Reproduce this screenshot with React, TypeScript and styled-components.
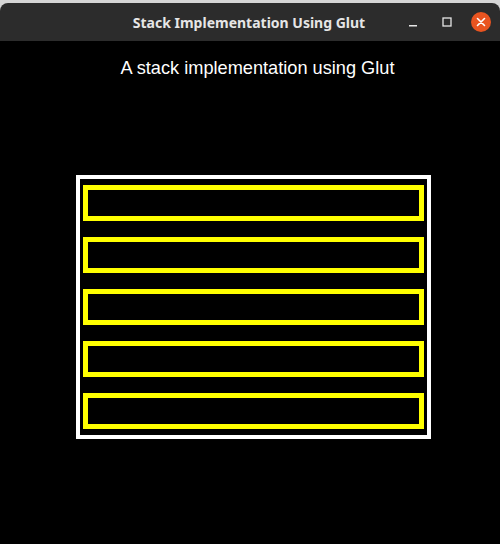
import React from "react";
import styled, { createGlobalStyle } from "styled-components";

const GlobalStyle = createGlobalStyle`
  html, body {
    margin: 0;
    padding: 0;
    background: #000;
  }
  #root {
    width: 500px;
    height: 544px;
  }
`;

// fenêtre complète
const Desktop = styled.div`
  width: 500px;
  height: 544px;
  background: #d6d6d6;
  display: flex;
  flex-direction: column;
  overflow: hidden;
`;

const TitleBar = styled.div`
  margin-top: 3px;
  height: 38px;
  flex: none;
  background: #2c2c2c;
  border-radius: 8px 8px 0 0;
  display: flex;
  align-items: center;
  position: relative;
`;

const Title = styled.div`
  flex: 1;
  text-align: center;
  color: #e6e6e6;
  font-family: "Noto Sans", "DejaVu Sans", sans-serif;
  font-weight: bold;
  font-size: 14px;
  padding-right: 2px;
`;

const Controls = styled.div`
  position: absolute;
  right: 2px;
  top: 0;
  bottom: 0;
  display: flex;
  align-items: center;
`;

const CtrlButton = styled.div<{ $close?: boolean }>`
  width: 34px;
  height: 34px;
  display: flex;
  align-items: center;
  justify-content: center;

  span {
    width: 20px;
    height: 20px;
    border-radius: 50%;
    display: flex;
    align-items: center;
    justify-content: center;
    background: ${(p) => (p.$close ? "#e95420" : "transparent")};
  }
`;

const Body = styled.div`
  flex: 1;
  background: #000;
  display: flex;
  flex-direction: column;
  align-items: center;
`;

const Caption = styled.div`
  margin-top: 16px;
  margin-left: 15px;
  color: #fff;
  font-family: "Liberation Sans", Arial, sans-serif;
  font-size: 18.2px;
  line-height: 22px;
`;

const StackFrame = styled.div`
  margin-top: 96px;
  margin-left: 7px;
  width: 355px;
  height: 264px;
  box-sizing: border-box;
  border: 4px solid #fff;
  padding: 6px 3px 5px 3px;
  display: flex;
  flex-direction: column;
  gap: 16px;
`;

const Slot = styled.div`
  height: 36px;
  flex: none;
  box-sizing: border-box;
  border: 5px solid #ffff00;
`;

const slots = [0, 1, 2, 3, 4];

export default function App() {
  return (
    <>
      <GlobalStyle />
      <Desktop>
        <TitleBar>
          <Title>Stack Implementation Using Glut</Title>
          <Controls>
            <CtrlButton>
              <span>
                <svg width="10" height="10" viewBox="0 0 10 10">
                  <rect x="1" y="8" width="8" height="1.5" fill="#e6e6e6" />
                </svg>
              </span>
            </CtrlButton>
            <CtrlButton>
              <span>
                <svg width="10" height="10" viewBox="0 0 10 10">
                  <rect x="1" y="1" width="8" height="8" fill="none" stroke="#e6e6e6" strokeWidth="1.3" />
                </svg>
              </span>
            </CtrlButton>
            <CtrlButton $close>
              <span>
                <svg width="10" height="10" viewBox="0 0 10 10">
                  <path d="M1.5 1.5 L8.5 8.5 M8.5 1.5 L1.5 8.5" stroke="#fff" strokeWidth="1.6" strokeLinecap="round" />
                </svg>
              </span>
            </CtrlButton>
          </Controls>
        </TitleBar>
        <Body>
          <Caption>A stack implementation using Glut</Caption>
          <StackFrame>
            {slots.map((i) => (
              <Slot key={i} />
            ))}
          </StackFrame>
        </Body>
      </Desktop>
    </>
  );
}
